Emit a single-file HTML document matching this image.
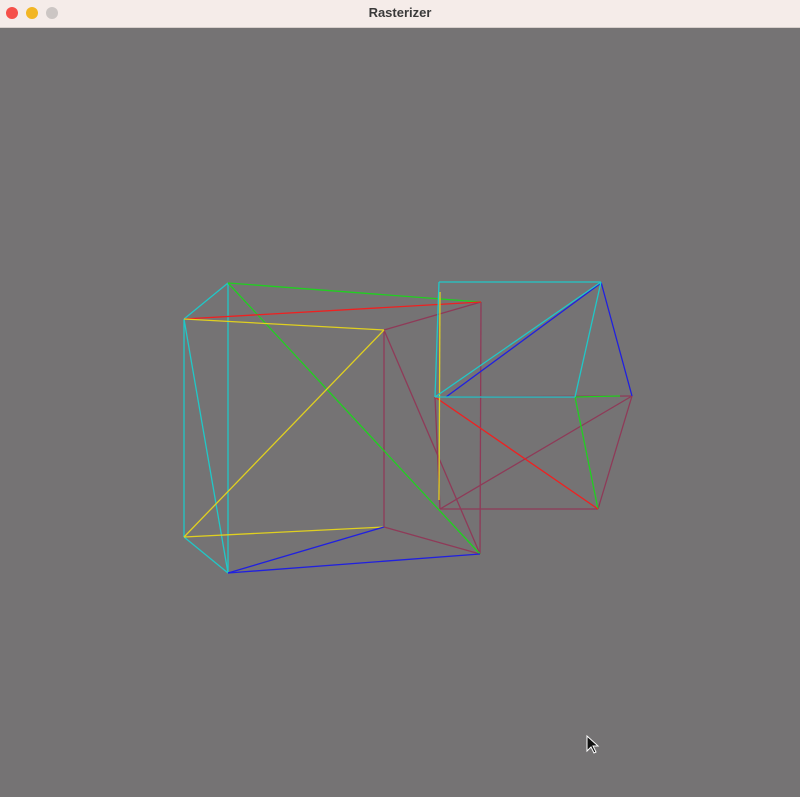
<!DOCTYPE html>
<html><head><style>
html,body{margin:0;padding:0;width:800px;height:797px;overflow:hidden;background:#757374;font-family:"Liberation Sans",sans-serif}
.tb{position:absolute;left:0;top:0;width:800px;height:27px;background:#f5ece9;border-bottom:1px solid #d8d0cc;text-align:center;font-size:13px;font-weight:bold;line-height:26px;color:#3a3a3a}
.d{position:absolute;top:7px;width:12px;height:12px;border-radius:50%}
</style></head><body>
<div class="tb">Rasterizer</div>
<div class="d" style="left:6px;background:#f5504a"></div>
<div class="d" style="left:26px;background:#f2b624"></div>
<div class="d" style="left:46px;background:#ccc6c4"></div>
<svg width="800" height="797" style="position:absolute;left:0;top:0" fill="none" stroke-width="1.3">
<g stroke="#8f3a58">
<line x1="384" y1="330" x2="481" y2="302"/><line x1="384" y1="330" x2="384" y2="527"/>
<line x1="384" y1="330" x2="480" y2="554"/><line x1="481" y1="302" x2="480" y2="554"/>
<line x1="384" y1="527" x2="480" y2="554"/>
<line x1="435" y1="397" x2="632" y2="396"/><line x1="632" y1="396" x2="598" y2="509"/>
<line x1="440" y1="509" x2="632" y2="396"/><line x1="440" y1="509" x2="598" y2="509"/>
<line x1="435" y1="397" x2="440" y2="509"/>
</g>
<g stroke="#20c8c8">
<line x1="184" y1="319" x2="228" y2="283"/><line x1="228" y1="283" x2="228" y2="573"/>
<line x1="184" y1="319" x2="184" y2="537"/><line x1="184" y1="319" x2="228" y2="573"/>
<line x1="184" y1="537" x2="228" y2="573"/>
</g>
<g stroke="#20d020"><line x1="228" y1="283" x2="481" y2="302"/><line x1="228" y1="283" x2="480" y2="554"/>
<line x1="575" y1="397" x2="620" y2="396"/><line x1="575" y1="397" x2="598" y2="509"/></g>
<g stroke="#f02020"><line x1="184" y1="319" x2="481" y2="302"/><line x1="435" y1="397" x2="598" y2="509"/></g>
<g stroke="#e0d020"><line x1="184" y1="319" x2="384" y2="330"/><line x1="384" y1="330" x2="184" y2="537"/>
<line x1="184" y1="537" x2="384" y2="527"/><line x1="440" y1="292" x2="439" y2="500"/></g>
<g stroke="#2020e0"><line x1="228" y1="573" x2="384" y2="527"/><line x1="228" y1="573" x2="480" y2="554"/>
<line x1="601" y1="282" x2="632" y2="396"/><line x1="446" y1="397" x2="601" y2="283"/></g>
<g stroke="#20c8c8"><line x1="439" y1="282" x2="601" y2="282"/><line x1="439" y1="282" x2="435" y2="397"/>
<line x1="435" y1="397" x2="601" y2="282"/><line x1="435" y1="397" x2="575" y2="397"/>
<line x1="575" y1="397" x2="601" y2="282"/></g>
<path d="M587 736 L587 751 L591 747 L594 753 L596 752 L593 746 L598 746 Z" fill="#111" stroke="#fff" stroke-width="1"/>
</svg>
</body></html>
